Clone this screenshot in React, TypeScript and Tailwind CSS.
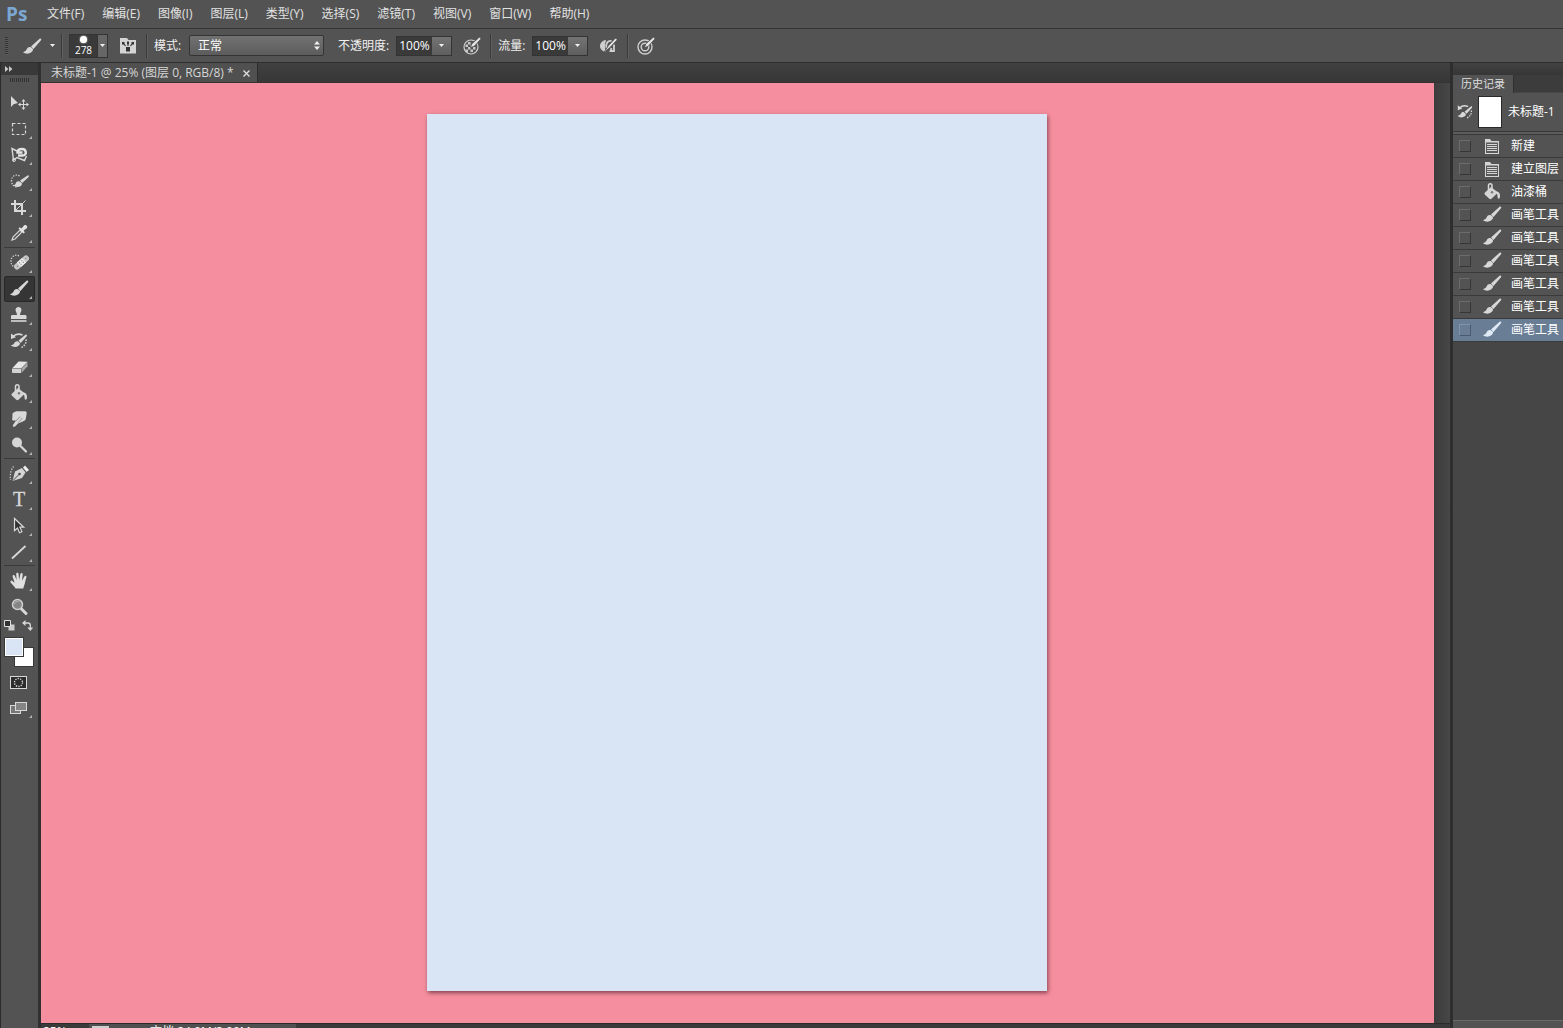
import { useState, type ReactNode } from 'react';

const LIGHT = '#d8d8d8';

function BrushShape({ color = LIGHT }: { color?: string }) {
  return (
    <g fill={color}>
      <path d="M17.600 1.700 9 9.400l2.500 2.600L19 3.300c.8-1.200-.3-2.400-1.400-1.600z" />
      <path d="M8.600 10.100c-1.800-.3-3.200.5-3.800 2-.6 1.700-1.600 2.500-3.800 3.100 1.900 1.700 5.800 2 8 .4 1.700-1.200 2.300-2.600 1.900-3.800z" />
    </g>
  );
}

function BucketShape() {
  return (
    <g>
      <path d="M3 10.500 9 5l7 5.500-6.500 6.300c-.7.600-1.500.6-2.200 0L3 12.800c-.7-.7-.7-1.600 0-2.300z" fill="#d4d4d4" />
      <path d="M6.500 9V3.600C6.500 1 10 1 10 3.600V10" fill="none" stroke={LIGHT} strokeWidth="1.500" />
      <circle cx="10" cy="10.300" r="1.200" fill="#777" />
      <path d="M14 9.500c2.800.2 4 1.500 4 4.200 0 1.900-.5 3-1.300 3s-1.200-1.100-1.200-2.700c0-1.400-.5-2.300-1.500-2.700z" fill={LIGHT} />
    </g>
  );
}

function HistoryBrushShape() {
  return (
    <g>
      <path d="M4 5.500C6.500 3 10 2.600 13.500 4" fill="none" stroke={LIGHT} strokeWidth="1.600" />
      <path d="M2 2.500v5.500l5-1.800z" fill={LIGHT} />
      <path d="M16.500 3.800 9.500 9.600l2.200 2.400L17.800 5.200c.6-1-.4-2-1.300-1.400zM8.800 10.200c-1.600-.3-2.900.4-3.400 1.800-.5 1.300-1.700 2-3.600 2.300 1.900 2 5.300 2.200 7.400.8 1.500-1 2-2 1.700-3z" fill={LIGHT} />
      <path d="M17 8.500c.6 3-1 6-4.500 8" fill="none" stroke={LIGHT} strokeWidth="1.500" strokeDasharray="1.500 1.300" />
    </g>
  );
}

function ListShape() {
  return (
    <g>
      <path d="M3 3h5l1.500 2H17v13H3z" fill="#d6d6d6" />
      <path d="M4 6.500h12v10.500H4z" fill="#5a5a5a" />
      <path d="M5 8.500h10M5 10.500h10M5 12.500h10M5 14.500h10" stroke="#d6d6d6" />
    </g>
  );
}

const toolGroups: { name: string; corner: boolean; art: ReactNode }[][] = [
  [
    {
      name: '移动工具',
      corner: false,
      art: (
        <g fill={LIGHT}>
          <path d="M2 3v11l2.600-2.800L9 10z" />
          <path d="M14.500 7.500v8M10.500 11.500h8" stroke={LIGHT} />
          <path d="m14.500 6 2 2.500h-4zM14.500 17l2-2.500h-4zM9 11.500l2.500-2v4zM20 11.500l-2.500-2v4z" />
        </g>
      ),
    },
    {
      name: '矩形选框工具',
      corner: true,
      art: <rect x="3.500" y="4.500" width="13" height="11" fill="none" stroke={LIGHT} strokeWidth="1.200" strokeDasharray="3 2" />,
    },
    {
      name: '磁性套索工具',
      corner: true,
      art: (
        <g fill="none">
          <path d="m8 6-5-2.500L4.500 15 8 12.500l7.500 3 2-4.500" stroke={LIGHT} strokeWidth="1.400" />
          <path d="M9 10.500h4.500c5 0 4-6.500-.5-6.500-3 0-4.500 1-4.500 3.500h5" stroke="#e4e4e4" strokeWidth="2.400" />
          <circle cx="5" cy="15" r="1.500" stroke={LIGHT} />
        </g>
      ),
    },
    {
      name: '快速选择工具',
      corner: true,
      art: (
        <g>
          <path d="M10.500 5C6.500 2.500 2.500 5.500 2.500 9.500s2 6 5 6.500" fill="none" stroke={LIGHT} strokeWidth="1.300" strokeDasharray="1.300 1.400" />
          <path d="m18.500 4.500-7.500 5 2.200 2.600 6.500-6.200c.6-1-.2-2-1.200-1.400zM10.200 10.200c-2-.2-3 .7-3.400 2-.3 1.100-1.200 1.700-2.300 2 2 2 5.200 2.200 7.300.7 1.300-1 1.400-2.100.9-2.900z" fill={LIGHT} />
        </g>
      ),
    },
    {
      name: '裁剪工具',
      corner: true,
      art: (
        <g fill="none" stroke={LIGHT} strokeWidth="2">
          <path d="M6 3v11h11M2 7h11v11" />
          <path d="m7 13 9.500-9.500" strokeWidth="1" />
        </g>
      ),
    },
    {
      name: '吸管工具',
      corner: true,
      art: (
        <g>
          <path d="m3 17 1-3 7-7 2 2-7 7z" fill="#555" stroke={LIGHT} strokeWidth="1.200" />
          <path d="m9.500 5.500 1.200-1.200 1.800 1.200 2.500-3c1.500-1.500 4.400.9 2.800 2.700l-3.200 2.400 1.200 1.800-1.200 1.200z" fill="#e4e4e4" />
        </g>
      ),
    },
  ],
  [
    {
      name: '污点修复画笔工具',
      corner: true,
      art: (
        <g>
          <path d="M10 3C6 .8 2 3.500 2 8c0 3 1 5 3.500 6" fill="none" stroke={LIGHT} strokeWidth="1.300" strokeDasharray="1.300 1.400" />
          <g transform="rotate(-42 12.500 9.500)">
            <rect x="3.500" y="6.500" width="18" height="6" rx="3" fill="#c6c6c6" />
            <rect x="9" y="6.500" width="7" height="6" fill="#ececec" />
            <path d="M10.500 8.500h.9M13.500 8.500h.9M10.500 10.500h.9M13.500 10.500h.9M6.500 9.500h.9M18 9.500h.9" stroke="#666" />
          </g>
        </g>
      ),
    },
    { name: '画笔工具', corner: true, art: <BrushShape /> },
    {
      name: '仿制图章工具',
      corner: true,
      art: (
        <g>
          <path d="M6.500 5c0-4 6-4 6 0 0 1.500-1.500 2.500-1.500 5h5c1 0 1.500.5 1.500 1.500V14H2v-2.500C2 10.500 2.500 10 3.500 10H8c0-2.500-1.500-3.500-1.500-5z" fill="#d8d8d8" />
          <path d="M2 16h15.500" stroke={LIGHT} strokeWidth="1.600" />
        </g>
      ),
    },
    { name: '历史记录画笔工具', corner: true, art: <HistoryBrushShape /> },
    {
      name: '橡皮擦工具',
      corner: true,
      art: (
        <g>
          <path d="m9.500 4.500 9 .3-6 6.200H3.500z" fill="#e6e6e6" />
          <path d="M3 11.500h9V16H3.800C3 16 3 15 3 14z" fill="#d2d2d2" />
          <path d="m12.500 11.500 6-6.200v4L12.500 16z" fill="#a8a8a8" />
        </g>
      ),
    },
    { name: '油漆桶工具', corner: true, art: <BucketShape /> },
    {
      name: '涂抹工具',
      corner: true,
      art: (
        <g>
          <path d="M3.500 4.500C5 2.500 8 2 11 2.300h5c1.500 0 2 1 1.600 2.500l-.8 5c-.3 1.500-1.500 2-3 2.700L9 14.500l-3 3c-1.200 1-2.800-.2-2-1.500l3-4.500H4.300c-1 0-1.500-.7-1-1.700z" fill="#dadada" />
          <path d="m7 12 4-4.500M9.300 13.500l4-4.500" stroke="#888" strokeWidth=".9" />
        </g>
      ),
    },
    {
      name: '减淡工具',
      corner: true,
      art: (
        <g>
          <circle cx="8" cy="7.500" r="5" fill="#d6d6d6" />
          <path d="m11.500 11 5.500 5.500" stroke={LIGHT} strokeWidth="2.200" strokeLinecap="round" />
        </g>
      ),
    },
  ],
  [
    {
      name: '钢笔工具',
      corner: true,
      art: (
        <g>
          <path d="M4.500 2.500C2 5.500.8 11 1.500 16" fill="none" stroke={LIGHT} strokeWidth="1.300" strokeDasharray="1.200 1.500" />
          <path d="M3.500 17 6 7.500 13 4l3.500 4.500L13 14z" fill="#d4d4d4" />
          <path d="m14 3.500 2-2 4 4.500-2.500 2z" fill="#eee" />
          <path d="m4 16.500 6-6" stroke="#4b4b4b" />
          <circle cx="10.500" cy="10" r="1.300" fill="#4b4b4b" />
        </g>
      ),
    },
    {
      name: '横排文字工具',
      corner: true,
      art: (
        <text x="10" y="16" textAnchor="middle" fontSize="20" fill={LIGHT} stroke={LIGHT} strokeWidth=".3" className="font-['Liberation_Serif',serif]">
          T
        </text>
      ),
    },
    {
      name: '路径选择工具',
      corner: true,
      art: <path d="M5.500 2.500v12.200l3-2.700 2 4.800 2.400-1-2-4.600h3.800z" fill="#333" stroke={LIGHT} strokeWidth="1.200" />,
    },
    { name: '直线工具', corner: true, art: <path d="M3 16.500 16.500 4" stroke={LIGHT} strokeWidth="1.800" /> },
  ],
  [
    {
      name: '抓手工具',
      corner: true,
      art: (
        <path
          d="M6.500 17.500c-1-2-2.800-3.500-4.800-6-1-1.500.7-2.600 1.900-1.300l2 1.600-2-6.300c-.4-1.700 1.700-2.200 2.200-.7L7.600 9.200 7.200 3c0-1.700 2.300-1.700 2.400 0l.5 6 1.300-6c.3-1.600 2.500-1.200 2.300.5l-.7 6.300 2.400-4.300c.8-1.300 2.500-.6 2 .8-1.200 3.700-1.200 5.300-2 7.500-.4 1.300-.9 2-1 3.700z"
          fill="#e0e0e0"
        />
      ),
    },
    {
      name: '缩放工具',
      corner: false,
      art: (
        <g>
          <path d="m12.500 12 4.500 4.500" stroke={LIGHT} strokeWidth="3" strokeLinecap="round" />
          <circle cx="8.500" cy="7.500" r="5" fill="#858585" stroke="#cfcfcf" strokeWidth="1.500" />
          <path d="M5.500 7c.5-2 2-2.800 4-2.500" fill="none" stroke="#b5b5b5" />
        </g>
      ),
    },
  ],
];

function Corner() {
  return <path d="M23 17v3h-3z" fill="#b5b5b5" />;
}

function Toolbar() {
  const [active, setActive] = useState('画笔工具');
  return (
    <aside className="flex w-[41px] shrink-0 flex-col border-r-[3px] border-l border-r-[#303030] border-l-[#2b2b2b] bg-[#535353]">
      <div className="flex h-3 items-center bg-[#393939] pl-1">
        <svg width="8" height="6" viewBox="0 0 8 6" fill="#c8c8c8" aria-hidden="true">
          <path d="m0 0 3.500 3L0 6zM4 0l3.500 3L4 6z" />
        </svg>
      </div>
      <div className="mt-[3px] ml-[9px] h-1 w-5 bg-[repeating-linear-gradient(90deg,#303030_0_1px,#555_1px_2px)]" />
      <div className="flex flex-col pt-2 pl-[3px]">
        {toolGroups.map((group, index) => (
          <div key={index} className={index > 0 ? 'w-[31px] border-t border-[#3a3a3a] pt-[2px]' : 'w-[31px] pb-[1px]'}>
            {group.map((tool) => (
              <button
                key={tool.name}
                type="button"
                aria-label={tool.name}
                aria-pressed={active === tool.name}
                onClick={() => setActive(tool.name)}
                className={
                  active === tool.name
                    ? 'flex h-[26px] w-full items-center rounded-xs border border-[#282828] bg-[#353535] pl-1'
                    : 'flex h-[26px] w-full items-center border border-transparent pl-1'
                }
              >
                <svg width="24" height="20" viewBox="0 0 24 20" aria-hidden="true">
                  {tool.art}
                  {tool.corner && <Corner />}
                </svg>
              </button>
            ))}
          </div>
        ))}
      </div>
      <div className="flex h-[17px] items-start justify-between pr-[5px] pl-[3px]">
        <button type="button" aria-label="默认前景色和背景色">
          <svg width="11" height="11" viewBox="0 0 11 11" aria-hidden="true">
            <path d="M4.500 4.500h6v6h-6z" fill="#ccc" />
            <path d="M.5.5h6v6h-6z" fill="#333" stroke="#e0e0e0" />
          </svg>
        </button>
        <button type="button" aria-label="切换前景色和背景色">
          <svg width="11" height="11" viewBox="0 0 11 11" aria-hidden="true">
            <path d="M2.500 3H6c1.500 0 2.300.8 2.300 2.300V8" fill="none" stroke={LIGHT} strokeWidth="1.300" />
            <path d="M0 3 3.500 0v6zM8.300 11 5.300 7.500h6z" fill={LIGHT} />
          </svg>
        </button>
      </div>
      <div className="ml-[3px] grid h-8 w-[30px] grid-cols-3 grid-rows-3 pb-[2px]">
        <button type="button" aria-label="背景色" className="col-span-2 col-start-2 row-span-2 row-start-2 border border-[#383838] bg-white" />
        <button type="button" aria-label="前景色" className="col-span-2 col-start-1 row-span-2 row-start-1 border border-[#383838] bg-[#d9e5f5] shadow-[inset_0_0_0_1px_#fff]" />
      </div>
      <button type="button" aria-label="以快速蒙版模式编辑" className="flex h-[26px] items-center pl-2">
        <svg width="24" height="20" viewBox="0 0 24 20" aria-hidden="true">
          <rect x="1.500" y="4.500" width="16" height="12" fill="#2c2c2c" stroke={LIGHT} />
          <circle cx="9.500" cy="10.500" r="4" fill="none" stroke={LIGHT} strokeWidth="1.400" strokeDasharray="1.300 1.200" />
        </svg>
      </button>
      <button type="button" aria-label="更改屏幕模式" className="flex h-[26px] items-center pl-2">
        <svg width="24" height="20" viewBox="0 0 24 20" aria-hidden="true">
          <rect x="1.500" y="7.500" width="10" height="8" fill="#777" stroke={LIGHT} />
          <rect x="6.500" y="4.500" width="11" height="8" fill="#858585" stroke={LIGHT} />
          <Corner />
        </svg>
      </button>
    </aside>
  );
}

const menus = ['文件(F)', '编辑(E)', '图像(I)', '图层(L)', '类型(Y)', '选择(S)', '滤镜(T)', '视图(V)', '窗口(W)', '帮助(H)'];

function MenuBar() {
  return (
    <nav className="flex h-7 shrink-0 items-center bg-[#535353] text-[#e2e2e2]">
      <span className="w-[47px] pl-[6px] font-['Open_Sans',sans-serif] text-[19px] leading-7 font-bold text-[#7ba7d3]">Ps</span>
      <div className="flex gap-[18px]">
        {menus.map((label) => (
          <button key={label} type="button" className="whitespace-nowrap">
            {label}
          </button>
        ))}
      </div>
    </nav>
  );
}

function Divider() {
  return <div className="h-6 w-[2px] shrink-0 border-r border-l border-r-[#5f5f5f] border-l-[#3a3a3a]" />;
}

function Caret() {
  return (
    <svg width="5" height="3" viewBox="0 0 5 3" fill="#f0f0f0" aria-hidden="true">
      <path d="M0 0h5L2.500 3z" />
    </svg>
  );
}

function PercentField({ id, label }: { id: string; label: string }) {
  const [value, setValue] = useState('100%');
  return (
    <div className="flex items-center gap-[7px]">
      <label htmlFor={id} className="whitespace-nowrap text-[#f0f0f0]">
        {label}
      </label>
      <div className="flex h-5 border border-[#343434]">
        <input
          id={id}
          value={value}
          onChange={(event) => setValue(event.target.value)}
          className="w-[35px] bg-[#3a3a3a] pl-[2px] font-['Open_Sans',sans-serif] text-white outline-none"
        />
        <button type="button" aria-label={`${label}选项`} className="flex w-[19px] items-center justify-center bg-linear-to-b from-[#747474] to-[#5e5e5e]">
          <Caret />
        </button>
      </div>
    </div>
  );
}

function PenStroke() {
  return <path d="m7.500 11.500 1.200-3.500 7-6.300c1.200-1 2.700.4 1.800 1.700L11 10.500z" fill="#e2e2e2" stroke="#4a4a4a" strokeWidth=".8" />;
}

function OptionsBar() {
  return (
    <div className="flex h-[35px] shrink-0 items-center border-t border-b border-t-[#333] border-b-[#2e2e2e] bg-[#535353]">
      <div className="ml-[5px] h-[18px] w-[3px] bg-[repeating-linear-gradient(180deg,#333_0_1px,#5c5c5c_1px_2px)]" />
      <button type="button" aria-label="工具预设" className="ml-[14px] flex items-center gap-2">
        <svg width="20" height="18" viewBox="0 0 20 18" aria-hidden="true">
          <BrushShape />
        </svg>
        <Caret />
      </button>
      <div className="ml-[6px]">
        <Divider />
      </div>
      <div className="ml-[6px] flex h-6 w-[39px] border border-[#343434]">
        <button type="button" className="flex flex-1 flex-col items-center bg-[#3a3a3a]">
          <span className="mt-[1px] size-[7px] shrink-0 rounded-full bg-white shadow-[0_0_2px_#fff]" />
          <span className="font-['Open_Sans',sans-serif] text-[10px] leading-[14px] text-white">278</span>
        </button>
        <button type="button" aria-label="画笔预设" className="flex w-[10px] items-center justify-center border-l border-[#343434] bg-[#666]">
          <Caret />
        </button>
      </div>
      <button type="button" aria-label="切换画笔面板" className="ml-3">
        <svg width="17" height="18" viewBox="0 0 17 18" aria-hidden="true">
          <path d="M0 1h7l1.500 2H16v13.500H0z" fill="#d4d4d4" />
          <path d="M6 10h4v4.500H6z" fill="#333" />
          <path d="M5.500 9 4 7M8 9V7M10.500 9 12 7" stroke="#333" strokeWidth="1.200" />
          <path d="M2 5h2.500v2.500H2zM7 4.500h2V7H7zM11.500 5H14v2.500h-2.500z" fill="#333" />
        </svg>
      </button>
      <div className="ml-[9px]">
        <Divider />
      </div>
      <div className="ml-[6px] flex items-center gap-[7px]">
        <label htmlFor="mode" className="w-[28px] whitespace-nowrap text-[#f0f0f0]">
          模式:
        </label>
        <div className="relative">
          <select
            id="mode"
            className="h-[21px] w-[135px] appearance-none rounded-xs border border-[#343434] bg-linear-to-b from-[#727272] to-[#5c5c5c] pl-2 text-white outline-none"
          >
            <option>正常</option>
            <option>溶解</option>
            <option>正片叠底</option>
          </select>
          <svg className="pointer-events-none absolute top-[6px] right-1" width="6" height="9" viewBox="0 0 6 9" fill="#eee" aria-hidden="true">
            <path d="M0 3.500h6L3 0zM0 5.500h6L3 9z" />
          </svg>
        </div>
      </div>
      <div className="ml-[14px]">
        <PercentField id="opacity" label="不透明度:" />
      </div>
      <button type="button" aria-label="始终对不透明度使用压力" className="ml-[11px]">
        <svg width="19" height="20" viewBox="0 0 19 20" aria-hidden="true">
          <circle cx="8" cy="11" r="7" fill="#555" stroke="#cfcfcf" strokeWidth="1.200" />
          <path d="M2.500 8.500h2.500v2.500H2.500zM5 11h2.500v2.500H5zM7.500 13.500H10V16H7.500zM5 6h2.500v2.500H5zM10 11h2.500v2.500H10zM2.500 13.500H5V16H2.500zM7.500 8.500H10V11H7.500z" fill="#c8c8c8" />
          <PenStroke />
        </svg>
      </button>
      <div className="ml-2">
        <Divider />
      </div>
      <div className="ml-[6px]">
        <PercentField id="flow" label="流量:" />
      </div>
      <button type="button" aria-label="启用喷枪样式的建立效果" className="ml-[11px]">
        <svg width="20" height="20" viewBox="0 0 20 20" aria-hidden="true">
          <path d="M6.500 4.500C3.500 5 1.500 7 1.500 10s2 5 5 5.500c-1.500-3.500-1.500-7.500 0-11z" fill="#d0d0d0" stroke="#d0d0d0" />
          <path d="M12.500 5C8.500 4.500 6.500 7.500 7.500 12" fill="none" stroke="#cfcfcf" strokeWidth="1.800" />
          <path d="M15 8.500V15h-3.500l1-3" fill="none" stroke="#cfcfcf" strokeWidth="1.800" />
          <path d="m5 16.500 4.500-7L16 2.500c1.200-1 2.700.4 1.800 1.700L11.500 11z" fill="#e2e2e2" stroke="#4a4a4a" strokeWidth=".8" />
        </svg>
      </button>
      <div className="ml-2">
        <Divider />
      </div>
      <button type="button" aria-label="始终对大小使用压力" className="ml-2">
        <svg width="19" height="20" viewBox="0 0 19 20" aria-hidden="true">
          <circle cx="8" cy="11" r="7" fill="none" stroke="#cfcfcf" strokeWidth="1.400" />
          <circle cx="8" cy="11" r="3.800" fill="none" stroke="#cfcfcf" strokeWidth="1.400" />
          <PenStroke />
        </svg>
      </button>
    </div>
  );
}

function DocumentArea() {
  return (
    <main className="flex min-w-0 flex-1 flex-col bg-[#3a3a3a]">
      <div className="flex h-5 shrink-0 items-stretch border-b border-[#333] bg-linear-to-b from-[#404040] to-[#373737]">
        <div className="flex items-center gap-[9px] border-r border-[#2c2c2c] bg-[#505050] pt-[1px] pr-[7px] pl-[10px] text-[#d6d6d6]">
          <span className="whitespace-nowrap">未标题-1 @ 25% (图层 0, RGB/8) *</span>
          <button type="button" aria-label="关闭">
            <svg width="7" height="7" viewBox="0 0 7 7" stroke="#dcdcdc" strokeWidth="1.400" aria-hidden="true">
              <path d="m.5.5 6 6M6.500.5l-6 6" />
            </svg>
          </button>
        </div>
      </div>
      <div className="flex min-h-0 flex-1">
        <div className="flex min-w-0 flex-1 justify-center bg-[#f58e9e] pt-[31px] pr-[1px] pb-8">
          <div className="aspect-[620/877] h-full bg-[#d9e5f5] shadow-[1px_2px_4px_rgba(60,20,30,0.6)]" />
        </div>
        <div className="w-4 shrink-0 bg-linear-to-r from-[#3c3c3c] to-[#474747]" />
      </div>
      <div className="h-[5px] shrink-0 overflow-hidden border-t border-[#2b2b2b] text-white">
        <div className="flex h-4 w-[255px] items-start leading-4">
          <span className="w-12 pl-[2px]">25%</span>
          <div className="flex h-full flex-1 items-start bg-[#505050] pl-[3px]">
            <span className="mt-[2px] h-2 w-[17px] shrink-0 bg-[#cfcfcf]" />
            <span className="pl-[41px] whitespace-nowrap">文档:24.9M/2.00M</span>
          </div>
        </div>
      </div>
    </main>
  );
}

const steps: { label: string; art: 'list' | 'bucket' | 'brush' }[] = [
  { label: '新建', art: 'list' },
  { label: '建立图层', art: 'list' },
  { label: '油漆桶', art: 'bucket' },
  { label: '画笔工具', art: 'brush' },
  { label: '画笔工具', art: 'brush' },
  { label: '画笔工具', art: 'brush' },
  { label: '画笔工具', art: 'brush' },
  { label: '画笔工具', art: 'brush' },
  { label: '画笔工具', art: 'brush' },
];

function HistoryPanel() {
  const [current, setCurrent] = useState(steps.length - 1);
  return (
    <aside className="flex w-[113px] shrink-0 flex-col overflow-hidden border-l-[3px] border-[#2e2e2e] bg-[#464646]">
      <div className="h-3 shrink-0 bg-linear-to-b from-[#424242] to-[#363636]" />
      <div className="flex h-[18px] shrink-0 border-b border-[#474747] bg-[#3c3c3c]">
        <div className="flex h-[18px] items-center border-r border-[#303030] bg-[#535353] px-2 text-[11px] text-[#dedede]">历史记录</div>
      </div>
      <div className="flex h-[38px] shrink-0 items-center bg-[#535353] pl-[3px]">
        <svg width="18" height="18" viewBox="0 0 20 20" aria-hidden="true">
          <HistoryBrushShape />
        </svg>
        <div className="ml-1 h-8 w-6 shrink-0 border border-[#2a2a2a] bg-white" />
        <span className="ml-[6px] whitespace-nowrap text-white">未标题-1</span>
      </div>
      <div className="h-1 shrink-0 border-t border-b border-[#393939] bg-[#5c5c5c]" />
      <ul>
        {steps.map((step, index) => (
          <li
            key={index}
            className={
              index === current
                ? 'flex h-[23px] items-center border-b border-[#3a3a3a] bg-[#697d95] pl-[6px]'
                : 'flex h-[23px] items-center border-b border-[#3a3a3a] bg-[#535353] pl-[6px]'
            }
          >
            <input
              type="checkbox"
              aria-label={`${step.label} 源`}
              className={
                index === current
                  ? 'size-3 shrink-0 appearance-none border border-t-[#8293a8] border-r-[#4a5a70] border-b-[#4a5a70] border-l-[#8293a8]'
                  : 'size-3 shrink-0 appearance-none border border-t-[#6c6c6c] border-r-[#363636] border-b-[#363636] border-l-[#6c6c6c]'
              }
            />
            <button type="button" onClick={() => setCurrent(index)} className="flex items-center pl-[11px] text-white">
              <svg width="20" height="20" viewBox="0 0 20 20" className="mr-[9px] shrink-0" aria-hidden="true">
                {step.art === 'list' && <ListShape />}
                {step.art === 'bucket' && <BucketShape />}
                {step.art === 'brush' && <BrushShape color={index === current ? '#dfe9f5' : LIGHT} />}
              </svg>
              <span className="whitespace-nowrap">{step.label}</span>
            </button>
          </li>
        ))}
      </ul>
      <div className="mt-auto h-2 shrink-0 border-t border-[#6a6a6a] bg-[#535353]" />
    </aside>
  );
}

export default function App() {
  return (
    <div className="flex h-screen flex-col overflow-hidden bg-[#535353] font-['Open_Sans','Noto_Sans_CJK_SC',sans-serif] text-xs leading-4">
      <MenuBar />
      <OptionsBar />
      <div className="flex min-h-0 flex-1">
        <Toolbar />
        <DocumentArea />
        <HistoryPanel />
      </div>
    </div>
  );
}
